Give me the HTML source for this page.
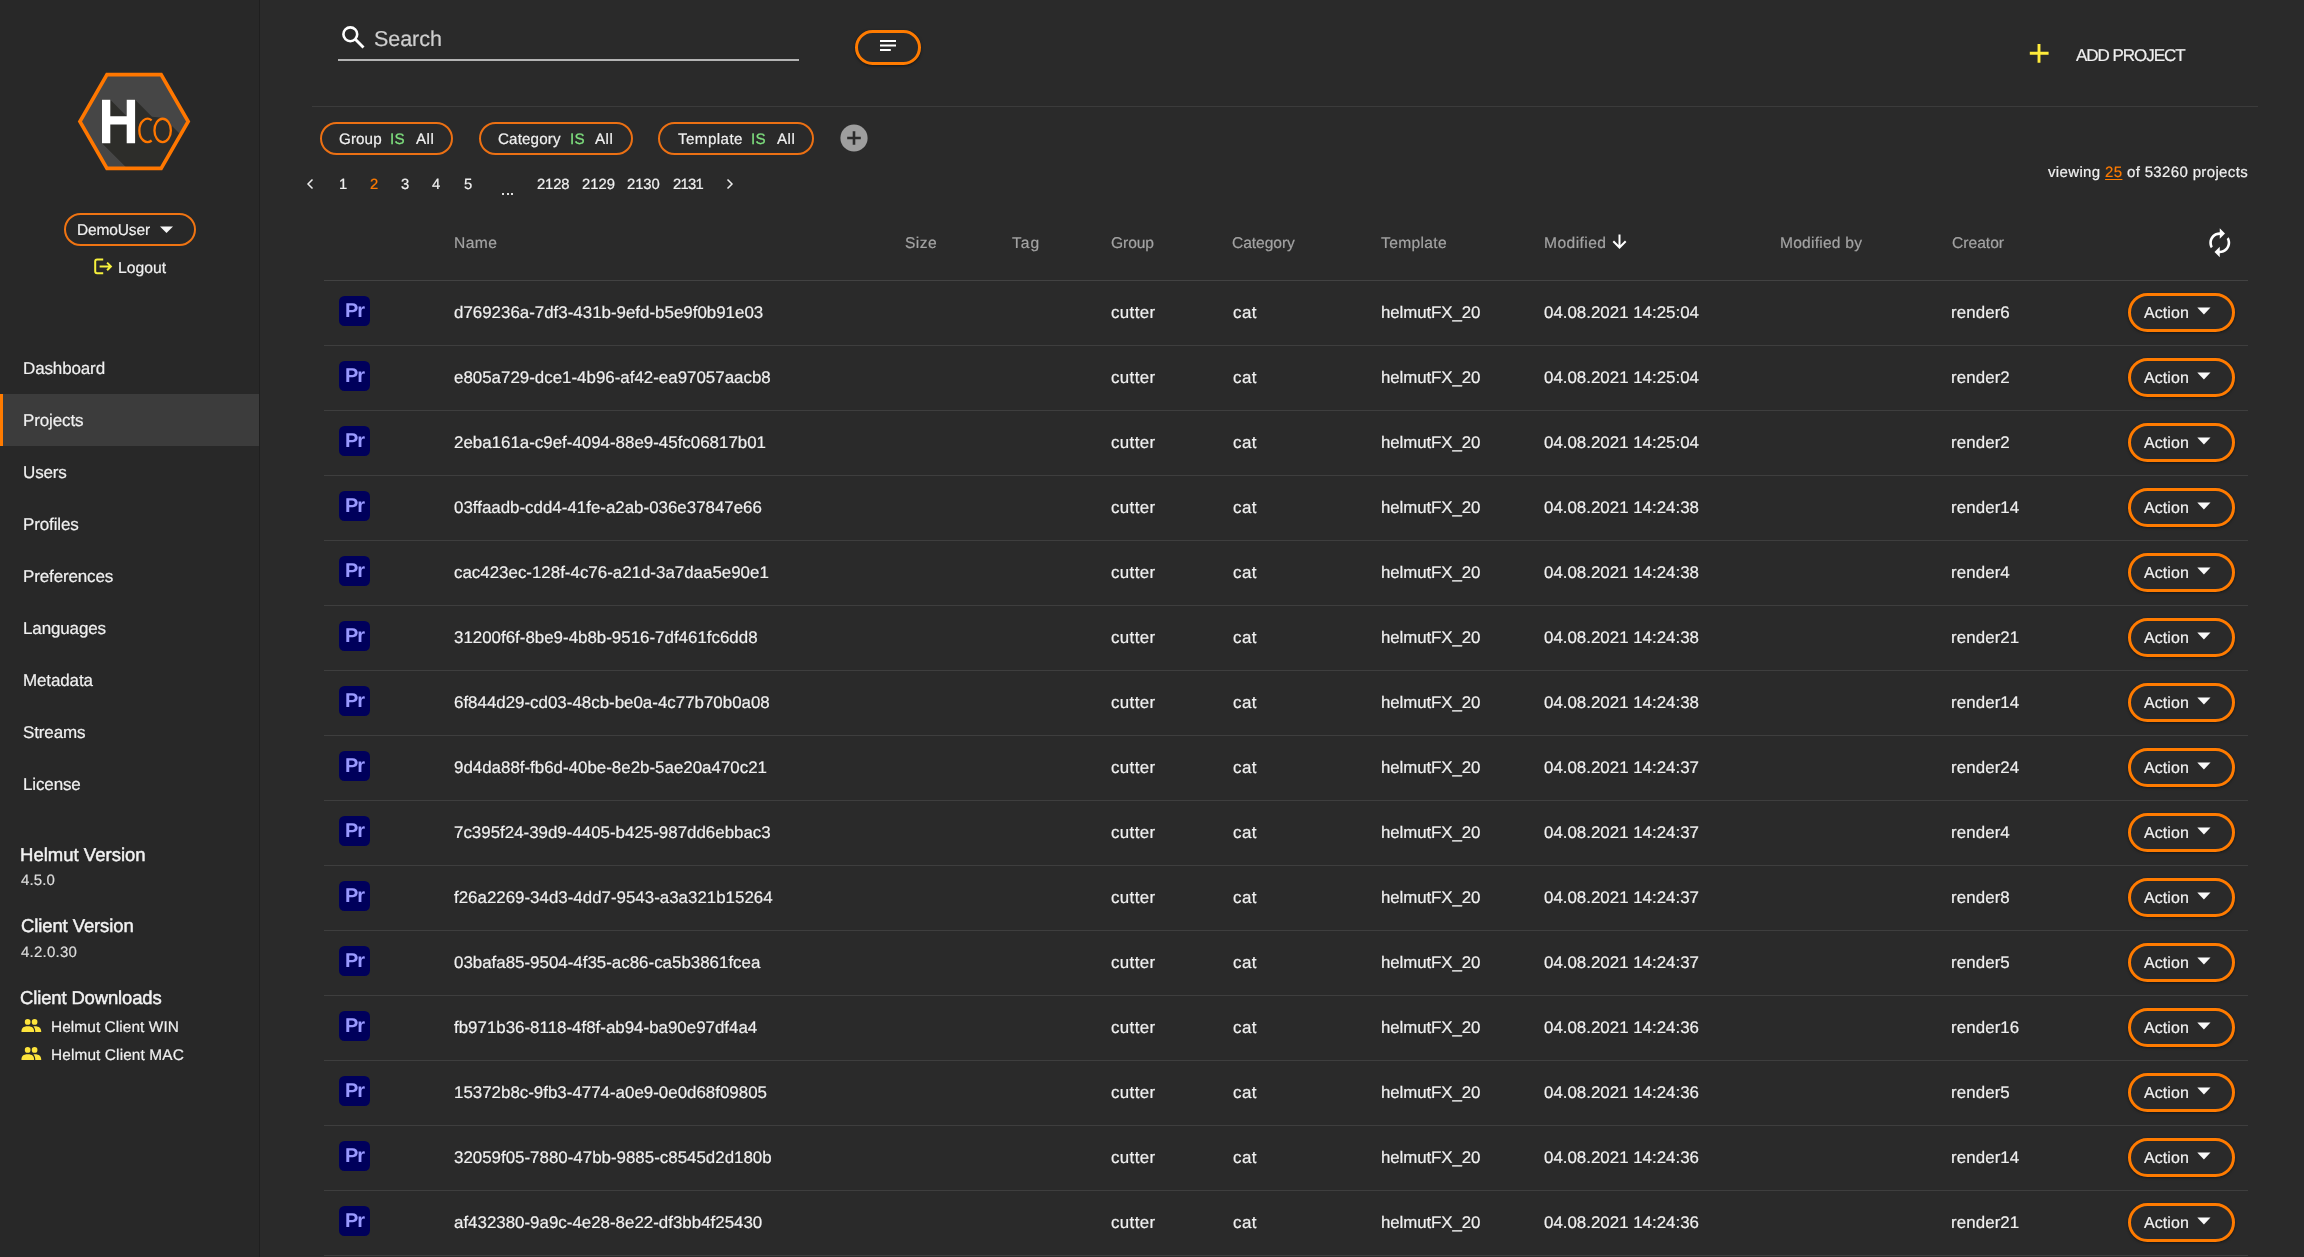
<!DOCTYPE html>
<html><head><meta charset="utf-8"><title>Projects</title>
<style>
html,body{margin:0;padding:0;}
body{width:2304px;height:1257px;overflow:hidden;position:relative;background:#2a2a2a;font-family:"Liberation Sans",sans-serif;text-rendering:geometricPrecision;}
.t{position:absolute;white-space:nowrap;line-height:1;will-change:transform;-webkit-text-stroke:0.2px currentColor;}
.pr{position:absolute;left:339px;width:30.5px;height:30px;background:#00005b;border-radius:5.5px;}
.pr span{will-change:transform;position:absolute;left:5.9px;top:5.2px;font-size:20px;line-height:1;font-weight:bold;color:#9999ff;letter-spacing:-1.1px}
.act{position:absolute;left:2128px;width:101px;height:33px;border:3px solid #ff7b00;border-radius:20px;box-shadow:0 1px 3px rgba(0,0,0,.45)}
</style></head><body>
<div style="position:absolute;left:0;top:0;width:259px;height:1257px;background:#282828"></div>
<div style="position:absolute;left:259px;top:0;width:1px;height:1257px;background:#1f1f1f"></div>
<svg style="position:absolute;left:0;top:0" width="260" height="200" viewBox="0 0 260 200">
<defs><clipPath id="hx"><polygon points="106.97,74.6 161.13,74.6 188.2,121.5 161.13,168.4 106.97,168.4 79.9,121.5"/></clipPath></defs>
<polygon points="106.97,74.6 161.13,74.6 188.2,121.5 161.13,168.4 106.97,168.4 79.9,121.5" fill="#464646"/>
<g clip-path="url(#hx)"><polygon fill="#2d2d2a" points="110.3,99.8 126.7,116.2 126.7,99.8 135.1,99.8 152,116.8 160,117.6 171,125 240,194 182,223.2 102,143.2 102,99.8"/></g>
<polygon points="106.97,74.6 161.13,74.6 188.2,121.5 161.13,168.4 106.97,168.4 79.9,121.5" fill="none" stroke="#ff7700" stroke-width="3.6"/>
<path fill="#ffffff" d="M102,99.8h8.3v16.4h16.4v-16.4h8.4v43.4h-8.4v-18.7h-16.4v18.7h-8.3z"/>
<path fill="none" stroke="#ff7700" stroke-width="2.3" d="M151.65,120.31 A8.2,11.65 0 1 0 151.65,140.49"/>
<ellipse cx="162.65" cy="130.4" rx="8.2" ry="11.65" fill="none" stroke="#ff7700" stroke-width="2.3"/>
</svg>
<div style="position:absolute;left:64px;top:213px;width:128px;height:29px;border:2px solid #f07412;border-radius:17px"></div>
<div id="demo" class="t" style="left:77.33px;top:223px;font-size:15.5px;color:#f0f0f0;letter-spacing:-0.144px;">DemoUser</div>
<svg style="position:absolute;left:159px;top:226px" width="15" height="8" viewBox="0 0 15 8"><polygon points="1,0.5 14,0.5 7.5,7" fill="#f5f5f5"/></svg>
<svg style="position:absolute;left:90px;top:255px" width="26" height="24" viewBox="0 0 26 24">
<path d="M13.2,4.4 H7.1 Q5.2,4.4 5.2,6.3 V16.3 Q5.2,18.2 7.1,18.2 H13.2" fill="none" stroke="#f6f03c" stroke-width="2"/>
<path d="M9.6,11.4 H20.6 M17.1,7.6 L20.9,11.4 L17.1,15.2" fill="none" stroke="#f6f03c" stroke-width="2"/>
</svg>
<div id="logout" class="t" style="left:118.08px;top:261px;font-size:15.7px;color:#f0f0f0;letter-spacing:0.039px;">Logout</div>
<div style="position:absolute;left:0;top:394px;width:259px;height:52px;background:#3c3c3c"></div>
<div style="position:absolute;left:0;top:394px;width:3px;height:52px;background:#ff7b00"></div>
<div id="nav0" class="t" style="left:23.02px;top:360px;font-size:17px;color:#f0f0f0;letter-spacing:-0.135px;">Dashboard</div>
<div id="nav1" class="t" style="left:23.02px;top:412px;font-size:17px;color:#f0f0f0;letter-spacing:-0.135px;">Projects</div>
<div id="nav2" class="t" style="left:23.02px;top:464px;font-size:17px;color:#f0f0f0;letter-spacing:-0.135px;">Users</div>
<div id="nav3" class="t" style="left:23.02px;top:516px;font-size:17px;color:#f0f0f0;letter-spacing:-0.135px;">Profiles</div>
<div id="nav4" class="t" style="left:23.02px;top:568px;font-size:17px;color:#f0f0f0;letter-spacing:-0.135px;">Preferences</div>
<div id="nav5" class="t" style="left:23.02px;top:620px;font-size:17px;color:#f0f0f0;letter-spacing:-0.135px;">Languages</div>
<div id="nav6" class="t" style="left:23.02px;top:672px;font-size:17px;color:#f0f0f0;letter-spacing:-0.135px;">Metadata</div>
<div id="nav7" class="t" style="left:23.02px;top:724px;font-size:17px;color:#f0f0f0;letter-spacing:-0.135px;">Streams</div>
<div id="nav8" class="t" style="left:23.02px;top:776px;font-size:17px;color:#f0f0f0;letter-spacing:-0.135px;">License</div>
<div id="hv" class="t" style="left:20.05px;top:846px;font-size:18.5px;color:#f2f2f2;letter-spacing:0.016px;-webkit-text-stroke:0.45px #f2f2f2;">Helmut Version</div>
<div id="hvn" class="t" style="left:21.12px;top:873px;font-size:15px;color:#dcdcdc;letter-spacing:0.119px;">4.5.0</div>
<div id="cv" class="t" style="left:21.13px;top:917px;font-size:18.5px;color:#f2f2f2;letter-spacing:-0.109px;-webkit-text-stroke:0.45px #f2f2f2;">Client Version</div>
<div id="cvn" class="t" style="left:21.12px;top:945px;font-size:15px;color:#dcdcdc;letter-spacing:0.232px;">4.2.0.30</div>
<div id="cd" class="t" style="left:20.12px;top:989px;font-size:18.5px;color:#f2f2f2;letter-spacing:-0.149px;-webkit-text-stroke:0.45px #f2f2f2;">Client Downloads</div>
<svg style="position:absolute;left:20px;top:1019px" width="23" height="15" viewBox="0 0 23 15">
<circle cx="7.65" cy="2.9" r="2.85" fill="#fde43c"/><circle cx="14.6" cy="2.9" r="2.85" fill="#fde43c"/>
<path d="M1.45,12.9 C1.45,9.4 2.9,7.3 7.8,7.3 C12.7,7.3 14.1,9.4 14.1,12.9 Z" fill="#fde43c"/>
<path d="M14.6,7.3 C19.6,7.3 21.25,9.4 21.25,12.9 H15.3 C15.3,10.7 14.6,9 13.4,7.6 C13.8,7.4 14.2,7.3 14.6,7.3 Z" fill="#fde43c"/>
</svg>
<svg style="position:absolute;left:20px;top:1047px" width="23" height="15" viewBox="0 0 23 15">
<circle cx="7.65" cy="2.9" r="2.85" fill="#fde43c"/><circle cx="14.6" cy="2.9" r="2.85" fill="#fde43c"/>
<path d="M1.45,12.9 C1.45,9.4 2.9,7.3 7.8,7.3 C12.7,7.3 14.1,9.4 14.1,12.9 Z" fill="#fde43c"/>
<path d="M14.6,7.3 C19.6,7.3 21.25,9.4 21.25,12.9 H15.3 C15.3,10.7 14.6,9 13.4,7.6 C13.8,7.4 14.2,7.3 14.6,7.3 Z" fill="#fde43c"/>
</svg>
<div id="win" class="t" style="left:51.02px;top:1020px;font-size:15.4px;color:#f0f0f0;letter-spacing:0.085px;">Helmut Client WIN</div>
<div id="mac" class="t" style="left:51.02px;top:1048px;font-size:15.4px;color:#f0f0f0;letter-spacing:0.120px;">Helmut Client MAC</div>
<svg style="position:absolute;left:338px;top:22px" width="32" height="32" viewBox="0 0 32 32">
<circle cx="12.3" cy="12.3" r="6.9" fill="none" stroke="#ffffff" stroke-width="2.6"/>
<path d="M17.3,17.3 L25.5,25.5" stroke="#ffffff" stroke-width="2.9"/></svg>
<div id="search" class="t" style="left:373.85px;top:29px;font-size:21.5px;color:#cfcfcf;letter-spacing:-0.055px;">Search</div>
<div style="position:absolute;left:338px;top:59px;width:461px;height:2px;background:#b4b4b4"></div>
<div style="position:absolute;left:855px;top:30px;width:60px;height:29px;border:3px solid #ff7b00;border-radius:18px;box-shadow:0 1px 3px rgba(0,0,0,.5)"></div>
<svg style="position:absolute;left:878px;top:38px" width="20" height="14" viewBox="0 0 20 14"><path d="M2,3 H18 M2,7.5 H18 M2,12 H12.8" stroke="#fff" stroke-width="1.9"/></svg>
<svg style="position:absolute;left:2028px;top:42px" width="22" height="22" viewBox="0 0 22 22"><path d="M11,2 V20.8 M1.8,11.3 H20.6" stroke="#ffeb3b" stroke-width="2.9"/></svg>
<div id="add" class="t" style="left:2076.02px;top:47px;font-size:17px;color:#f0f0f0;letter-spacing:-1.031px;">ADD PROJECT</div>
<div style="position:absolute;left:312px;top:106px;width:1946px;height:1px;background:#3b3b3b"></div>
<div style="position:absolute;left:320px;top:122px;width:129px;height:29px;border:2px solid #ec7013;border-radius:17px"></div>
<div id="chlg" class="t" style="left:338.62px;top:132px;font-size:15.2px;color:#f0f0f0;letter-spacing:0.097px;">Group</div>
<div id="chig" class="t" style="left:390.12px;top:132px;font-size:15.2px;color:#7fe07f;letter-spacing:0.4px;-webkit-text-stroke:0.25px #7fe07f;">IS</div>
<div id="chag" class="t" style="left:416.04px;top:132px;font-size:15.2px;color:#f0f0f0;letter-spacing:0.461px;">All</div>
<div style="position:absolute;left:479px;top:122px;width:150px;height:29px;border:2px solid #ec7013;border-radius:17px"></div>
<div id="chlc" class="t" style="left:497.62px;top:132px;font-size:15.2px;color:#f0f0f0;letter-spacing:0.131px;">Category</div>
<div id="chic" class="t" style="left:569.86px;top:132px;font-size:15.2px;color:#7fe07f;letter-spacing:0.4px;-webkit-text-stroke:0.25px #7fe07f;">IS</div>
<div id="chac" class="t" style="left:594.84px;top:132px;font-size:15.2px;color:#f0f0f0;letter-spacing:0.461px;">All</div>
<div style="position:absolute;left:658px;top:122px;width:152px;height:29px;border:2px solid #ec7013;border-radius:17px"></div>
<div id="chlt" class="t" style="left:678.14px;top:132px;font-size:15.2px;color:#f0f0f0;letter-spacing:0.407px;">Template</div>
<div id="chit" class="t" style="left:751.46px;top:132px;font-size:15.2px;color:#7fe07f;letter-spacing:0.4px;-webkit-text-stroke:0.25px #7fe07f;">IS</div>
<div id="chat" class="t" style="left:776.84px;top:132px;font-size:15.2px;color:#f0f0f0;letter-spacing:0.461px;">All</div>
<svg style="position:absolute;left:840px;top:124px" width="28" height="28" viewBox="0 0 28 28"><circle cx="14" cy="14" r="13.6" fill="#9e9e9e"/><path d="M14,7.2 V20.8 M7.2,14 H20.8" stroke="#2b2b2b" stroke-width="2.6"/></svg>
<svg style="position:absolute;left:303px;top:176px" width="14" height="16" viewBox="0 0 14 16"><path d="M9.5,3.5 L5,8 L9.5,12.5" fill="none" stroke="#ececec" stroke-width="1.5"/></svg>
<svg style="position:absolute;left:723px;top:176px" width="14" height="16" viewBox="0 0 14 16"><path d="M4.5,3.5 L9,8 L4.5,12.5" fill="none" stroke="#ececec" stroke-width="1.5"/></svg>
<div id="pg0" class="t" style="left:339.12px;top:178px;font-size:14.8px;color:#f0f0f0;">1</div>
<div id="pg1" class="t" style="left:370.30px;top:178px;font-size:14.8px;color:#ff7b00;">2</div>
<div id="pg2" class="t" style="left:400.91px;top:178px;font-size:14.8px;color:#f0f0f0;">3</div>
<div id="pg3" class="t" style="left:432.49px;top:178px;font-size:14.8px;color:#f0f0f0;">4</div>
<div id="pg4" class="t" style="left:464.17px;top:178px;font-size:14.8px;color:#f0f0f0;">5</div>
<div id="pg5" class="t" style="left:536.76px;top:178px;font-size:14.8px;color:#f0f0f0;letter-spacing:-0.115px;">2128</div>
<div id="pg6" class="t" style="left:581.76px;top:178px;font-size:14.8px;color:#f0f0f0;letter-spacing:0.039px;">2129</div>
<div id="pg7" class="t" style="left:626.76px;top:178px;font-size:14.8px;color:#f0f0f0;letter-spacing:-0.063px;">2130</div>
<div id="pg8" class="t" style="left:672.92px;top:178px;font-size:14.8px;color:#f0f0f0;letter-spacing:-0.696px;">2131</div>
<div style="position:absolute;left:502px;top:193px;width:2px;height:2px;background:#e0e0e0"></div>
<div style="position:absolute;left:506.5px;top:193px;width:2px;height:2px;background:#e0e0e0"></div>
<div style="position:absolute;left:511px;top:193px;width:2px;height:2px;background:#e0e0e0"></div>
<div id="view" class="t" style="left:2048.29px;top:165px;font-size:15px;color:#f0f0f0;letter-spacing:0.353px;">viewing <span style="color:#ff7b00;text-decoration:underline;text-decoration-thickness:1.3px;text-underline-offset:1.8px">25</span> of 53260 projects</div>
<div id="h0" class="t" style="left:453.78px;top:236px;font-size:15.6px;color:#a3a3a3;letter-spacing:0.419px;">Name</div>
<div id="h1" class="t" style="left:905.31px;top:236px;font-size:15.6px;color:#a3a3a3;letter-spacing:0.407px;">Size</div>
<div id="h2" class="t" style="left:1011.50px;top:236px;font-size:15.6px;color:#a3a3a3;letter-spacing:1.000px;">Tag</div>
<div id="h3" class="t" style="left:1111.30px;top:236px;font-size:15.6px;color:#a3a3a3;letter-spacing:-0.087px;">Group</div>
<div id="h4" class="t" style="left:1232.27px;top:236px;font-size:15.6px;color:#a3a3a3;letter-spacing:-0.065px;">Category</div>
<div id="h5" class="t" style="left:1380.70px;top:236px;font-size:15.6px;color:#a3a3a3;letter-spacing:0.351px;">Template</div>
<div id="h6" class="t" style="left:1544.39px;top:236px;font-size:15.6px;color:#a3a3a3;letter-spacing:0.440px;">Modified</div>
<div id="h7" class="t" style="left:1779.79px;top:236px;font-size:15.6px;color:#a3a3a3;letter-spacing:0.223px;">Modified by</div>
<div id="h8" class="t" style="left:1952.27px;top:236px;font-size:15.6px;color:#a3a3a3;letter-spacing:0.008px;">Creator</div>
<svg style="position:absolute;left:1609px;top:232px" width="20" height="20" viewBox="0 0 20 20"><path d="M10.5,2.6 V15.3 M4.3,9.3 L10.5,15.5 L16.7,9.3" fill="none" stroke="#fff" stroke-width="2"/></svg>
<svg style="position:absolute;left:2203.75px;top:227.3px" width="31.5" height="31.5" viewBox="0 0 24 24"><path fill="#fff" d="M12 6v3l4-4-4-4v3c-4.42 0-8 3.58-8 8 0 1.57.46 3.03 1.24 4.26L6.7 14.8c-.45-.83-.7-1.790-.7-2.8 0-3.310 2.690-6 6-6zm6.76 1.74L17.3 9.2c.44.84.7 1.79.7 2.8 0 3.31-2.69 6-6 6v-3l-4 4 4 4v-3c4.42 0 8-3.580 8-8 0-1.57-.46-3.03-1.24-4.26z"/></svg>
<div style="position:absolute;left:324px;top:280px;width:1924px;height:1px;background:#424242"></div>
<div class="pr" style="top:296px"><span>Pr</span></div>
<div id="nm0" class="t" style="left:454.45px;top:305px;font-size:16.9px;color:#f0f0f0;letter-spacing:0.005px;">d769236a-7df3-431b-9efd-b5e9f0b91e03</div>
<div id="cu0" class="t" style="left:1111.15px;top:305px;font-size:16.9px;color:#f0f0f0;letter-spacing:0.382px;">cutter</div>
<div id="ca0" class="t" style="left:1232.90px;top:305px;font-size:16.9px;color:#f0f0f0;letter-spacing:0.443px;">cat</div>
<div id="fx0" class="t" style="left:1380.59px;top:305px;font-size:16.9px;color:#f0f0f0;letter-spacing:-0.099px;">helmutFX_20</div>
<div id="dt0" class="t" style="left:1544.46px;top:305px;font-size:16.9px;color:#f0f0f0;letter-spacing:0.000px;">04.08.2021 14:25:04</div>
<div id="cr0" class="t" style="left:1951.45px;top:305px;font-size:16.9px;color:#f0f0f0;letter-spacing:0.091px;">render6</div>
<div class="act" style="top:293px"></div>
<div id="ac0" class="t" style="left:2144.09px;top:306px;font-size:16px;color:#f2f2f2;letter-spacing:0.068px;">Action</div>
<svg style="position:absolute;left:2196px;top:306px" width="16" height="10" viewBox="0 0 16 10"><polygon points="1.3,1.5 14.5,1.5 7.9,8.6" fill="#fafafa"/></svg>
<div style="position:absolute;left:324px;top:345px;width:1924px;height:1px;background:#3e3e3e"></div>
<div class="pr" style="top:361px"><span>Pr</span></div>
<div id="nm1" class="t" style="left:454.45px;top:370px;font-size:16.9px;color:#f0f0f0;letter-spacing:0.005px;">e805a729-dce1-4b96-af42-ea97057aacb8</div>
<div id="cu1" class="t" style="left:1111.15px;top:370px;font-size:16.9px;color:#f0f0f0;letter-spacing:0.382px;">cutter</div>
<div id="ca1" class="t" style="left:1232.90px;top:370px;font-size:16.9px;color:#f0f0f0;letter-spacing:0.443px;">cat</div>
<div id="fx1" class="t" style="left:1380.59px;top:370px;font-size:16.9px;color:#f0f0f0;letter-spacing:-0.099px;">helmutFX_20</div>
<div id="dt1" class="t" style="left:1544.46px;top:370px;font-size:16.9px;color:#f0f0f0;letter-spacing:0.000px;">04.08.2021 14:25:04</div>
<div id="cr1" class="t" style="left:1951.45px;top:370px;font-size:16.9px;color:#f0f0f0;letter-spacing:0.091px;">render2</div>
<div class="act" style="top:358px"></div>
<div id="ac1" class="t" style="left:2144.09px;top:371px;font-size:16px;color:#f2f2f2;letter-spacing:0.068px;">Action</div>
<svg style="position:absolute;left:2196px;top:371px" width="16" height="10" viewBox="0 0 16 10"><polygon points="1.3,1.5 14.5,1.5 7.9,8.6" fill="#fafafa"/></svg>
<div style="position:absolute;left:324px;top:410px;width:1924px;height:1px;background:#3e3e3e"></div>
<div class="pr" style="top:426px"><span>Pr</span></div>
<div id="nm2" class="t" style="left:454.45px;top:435px;font-size:16.9px;color:#f0f0f0;letter-spacing:0.005px;">2eba161a-c9ef-4094-88e9-45fc06817b01</div>
<div id="cu2" class="t" style="left:1111.15px;top:435px;font-size:16.9px;color:#f0f0f0;letter-spacing:0.382px;">cutter</div>
<div id="ca2" class="t" style="left:1232.90px;top:435px;font-size:16.9px;color:#f0f0f0;letter-spacing:0.443px;">cat</div>
<div id="fx2" class="t" style="left:1380.59px;top:435px;font-size:16.9px;color:#f0f0f0;letter-spacing:-0.099px;">helmutFX_20</div>
<div id="dt2" class="t" style="left:1544.46px;top:435px;font-size:16.9px;color:#f0f0f0;letter-spacing:0.000px;">04.08.2021 14:25:04</div>
<div id="cr2" class="t" style="left:1951.45px;top:435px;font-size:16.9px;color:#f0f0f0;letter-spacing:0.091px;">render2</div>
<div class="act" style="top:423px"></div>
<div id="ac2" class="t" style="left:2144.09px;top:436px;font-size:16px;color:#f2f2f2;letter-spacing:0.068px;">Action</div>
<svg style="position:absolute;left:2196px;top:436px" width="16" height="10" viewBox="0 0 16 10"><polygon points="1.3,1.5 14.5,1.5 7.9,8.6" fill="#fafafa"/></svg>
<div style="position:absolute;left:324px;top:475px;width:1924px;height:1px;background:#3e3e3e"></div>
<div class="pr" style="top:491px"><span>Pr</span></div>
<div id="nm3" class="t" style="left:454.45px;top:500px;font-size:16.9px;color:#f0f0f0;letter-spacing:0.005px;">03ffaadb-cdd4-41fe-a2ab-036e37847e66</div>
<div id="cu3" class="t" style="left:1111.15px;top:500px;font-size:16.9px;color:#f0f0f0;letter-spacing:0.382px;">cutter</div>
<div id="ca3" class="t" style="left:1232.90px;top:500px;font-size:16.9px;color:#f0f0f0;letter-spacing:0.443px;">cat</div>
<div id="fx3" class="t" style="left:1380.59px;top:500px;font-size:16.9px;color:#f0f0f0;letter-spacing:-0.099px;">helmutFX_20</div>
<div id="dt3" class="t" style="left:1544.46px;top:500px;font-size:16.9px;color:#f0f0f0;letter-spacing:0.000px;">04.08.2021 14:24:38</div>
<div id="cr3" class="t" style="left:1951.45px;top:500px;font-size:16.9px;color:#f0f0f0;letter-spacing:0.091px;">render14</div>
<div class="act" style="top:488px"></div>
<div id="ac3" class="t" style="left:2144.09px;top:501px;font-size:16px;color:#f2f2f2;letter-spacing:0.068px;">Action</div>
<svg style="position:absolute;left:2196px;top:501px" width="16" height="10" viewBox="0 0 16 10"><polygon points="1.3,1.5 14.5,1.5 7.9,8.6" fill="#fafafa"/></svg>
<div style="position:absolute;left:324px;top:540px;width:1924px;height:1px;background:#3e3e3e"></div>
<div class="pr" style="top:556px"><span>Pr</span></div>
<div id="nm4" class="t" style="left:454.45px;top:565px;font-size:16.9px;color:#f0f0f0;letter-spacing:0.005px;">cac423ec-128f-4c76-a21d-3a7daa5e90e1</div>
<div id="cu4" class="t" style="left:1111.15px;top:565px;font-size:16.9px;color:#f0f0f0;letter-spacing:0.382px;">cutter</div>
<div id="ca4" class="t" style="left:1232.90px;top:565px;font-size:16.9px;color:#f0f0f0;letter-spacing:0.443px;">cat</div>
<div id="fx4" class="t" style="left:1380.59px;top:565px;font-size:16.9px;color:#f0f0f0;letter-spacing:-0.099px;">helmutFX_20</div>
<div id="dt4" class="t" style="left:1544.46px;top:565px;font-size:16.9px;color:#f0f0f0;letter-spacing:0.000px;">04.08.2021 14:24:38</div>
<div id="cr4" class="t" style="left:1951.45px;top:565px;font-size:16.9px;color:#f0f0f0;letter-spacing:0.091px;">render4</div>
<div class="act" style="top:553px"></div>
<div id="ac4" class="t" style="left:2144.09px;top:566px;font-size:16px;color:#f2f2f2;letter-spacing:0.068px;">Action</div>
<svg style="position:absolute;left:2196px;top:566px" width="16" height="10" viewBox="0 0 16 10"><polygon points="1.3,1.5 14.5,1.5 7.9,8.6" fill="#fafafa"/></svg>
<div style="position:absolute;left:324px;top:605px;width:1924px;height:1px;background:#3e3e3e"></div>
<div class="pr" style="top:621px"><span>Pr</span></div>
<div id="nm5" class="t" style="left:454.45px;top:630px;font-size:16.9px;color:#f0f0f0;letter-spacing:0.005px;">31200f6f-8be9-4b8b-9516-7df461fc6dd8</div>
<div id="cu5" class="t" style="left:1111.15px;top:630px;font-size:16.9px;color:#f0f0f0;letter-spacing:0.382px;">cutter</div>
<div id="ca5" class="t" style="left:1232.90px;top:630px;font-size:16.9px;color:#f0f0f0;letter-spacing:0.443px;">cat</div>
<div id="fx5" class="t" style="left:1380.59px;top:630px;font-size:16.9px;color:#f0f0f0;letter-spacing:-0.099px;">helmutFX_20</div>
<div id="dt5" class="t" style="left:1544.46px;top:630px;font-size:16.9px;color:#f0f0f0;letter-spacing:0.000px;">04.08.2021 14:24:38</div>
<div id="cr5" class="t" style="left:1951.45px;top:630px;font-size:16.9px;color:#f0f0f0;letter-spacing:0.091px;">render21</div>
<div class="act" style="top:618px"></div>
<div id="ac5" class="t" style="left:2144.09px;top:631px;font-size:16px;color:#f2f2f2;letter-spacing:0.068px;">Action</div>
<svg style="position:absolute;left:2196px;top:631px" width="16" height="10" viewBox="0 0 16 10"><polygon points="1.3,1.5 14.5,1.5 7.9,8.6" fill="#fafafa"/></svg>
<div style="position:absolute;left:324px;top:670px;width:1924px;height:1px;background:#3e3e3e"></div>
<div class="pr" style="top:686px"><span>Pr</span></div>
<div id="nm6" class="t" style="left:454.45px;top:695px;font-size:16.9px;color:#f0f0f0;letter-spacing:0.005px;">6f844d29-cd03-48cb-be0a-4c77b70b0a08</div>
<div id="cu6" class="t" style="left:1111.15px;top:695px;font-size:16.9px;color:#f0f0f0;letter-spacing:0.382px;">cutter</div>
<div id="ca6" class="t" style="left:1232.90px;top:695px;font-size:16.9px;color:#f0f0f0;letter-spacing:0.443px;">cat</div>
<div id="fx6" class="t" style="left:1380.59px;top:695px;font-size:16.9px;color:#f0f0f0;letter-spacing:-0.099px;">helmutFX_20</div>
<div id="dt6" class="t" style="left:1544.46px;top:695px;font-size:16.9px;color:#f0f0f0;letter-spacing:0.000px;">04.08.2021 14:24:38</div>
<div id="cr6" class="t" style="left:1951.45px;top:695px;font-size:16.9px;color:#f0f0f0;letter-spacing:0.091px;">render14</div>
<div class="act" style="top:683px"></div>
<div id="ac6" class="t" style="left:2144.09px;top:696px;font-size:16px;color:#f2f2f2;letter-spacing:0.068px;">Action</div>
<svg style="position:absolute;left:2196px;top:696px" width="16" height="10" viewBox="0 0 16 10"><polygon points="1.3,1.5 14.5,1.5 7.9,8.6" fill="#fafafa"/></svg>
<div style="position:absolute;left:324px;top:735px;width:1924px;height:1px;background:#3e3e3e"></div>
<div class="pr" style="top:751px"><span>Pr</span></div>
<div id="nm7" class="t" style="left:454.45px;top:760px;font-size:16.9px;color:#f0f0f0;letter-spacing:0.005px;">9d4da88f-fb6d-40be-8e2b-5ae20a470c21</div>
<div id="cu7" class="t" style="left:1111.15px;top:760px;font-size:16.9px;color:#f0f0f0;letter-spacing:0.382px;">cutter</div>
<div id="ca7" class="t" style="left:1232.90px;top:760px;font-size:16.9px;color:#f0f0f0;letter-spacing:0.443px;">cat</div>
<div id="fx7" class="t" style="left:1380.59px;top:760px;font-size:16.9px;color:#f0f0f0;letter-spacing:-0.099px;">helmutFX_20</div>
<div id="dt7" class="t" style="left:1544.46px;top:760px;font-size:16.9px;color:#f0f0f0;letter-spacing:0.000px;">04.08.2021 14:24:37</div>
<div id="cr7" class="t" style="left:1951.45px;top:760px;font-size:16.9px;color:#f0f0f0;letter-spacing:0.091px;">render24</div>
<div class="act" style="top:748px"></div>
<div id="ac7" class="t" style="left:2144.09px;top:761px;font-size:16px;color:#f2f2f2;letter-spacing:0.068px;">Action</div>
<svg style="position:absolute;left:2196px;top:761px" width="16" height="10" viewBox="0 0 16 10"><polygon points="1.3,1.5 14.5,1.5 7.9,8.6" fill="#fafafa"/></svg>
<div style="position:absolute;left:324px;top:800px;width:1924px;height:1px;background:#3e3e3e"></div>
<div class="pr" style="top:816px"><span>Pr</span></div>
<div id="nm8" class="t" style="left:454.45px;top:825px;font-size:16.9px;color:#f0f0f0;letter-spacing:0.005px;">7c395f24-39d9-4405-b425-987dd6ebbac3</div>
<div id="cu8" class="t" style="left:1111.15px;top:825px;font-size:16.9px;color:#f0f0f0;letter-spacing:0.382px;">cutter</div>
<div id="ca8" class="t" style="left:1232.90px;top:825px;font-size:16.9px;color:#f0f0f0;letter-spacing:0.443px;">cat</div>
<div id="fx8" class="t" style="left:1380.59px;top:825px;font-size:16.9px;color:#f0f0f0;letter-spacing:-0.099px;">helmutFX_20</div>
<div id="dt8" class="t" style="left:1544.46px;top:825px;font-size:16.9px;color:#f0f0f0;letter-spacing:0.000px;">04.08.2021 14:24:37</div>
<div id="cr8" class="t" style="left:1951.45px;top:825px;font-size:16.9px;color:#f0f0f0;letter-spacing:0.091px;">render4</div>
<div class="act" style="top:813px"></div>
<div id="ac8" class="t" style="left:2144.09px;top:826px;font-size:16px;color:#f2f2f2;letter-spacing:0.068px;">Action</div>
<svg style="position:absolute;left:2196px;top:826px" width="16" height="10" viewBox="0 0 16 10"><polygon points="1.3,1.5 14.5,1.5 7.9,8.6" fill="#fafafa"/></svg>
<div style="position:absolute;left:324px;top:865px;width:1924px;height:1px;background:#3e3e3e"></div>
<div class="pr" style="top:881px"><span>Pr</span></div>
<div id="nm9" class="t" style="left:454.45px;top:890px;font-size:16.9px;color:#f0f0f0;letter-spacing:0.005px;">f26a2269-34d3-4dd7-9543-a3a321b15264</div>
<div id="cu9" class="t" style="left:1111.15px;top:890px;font-size:16.9px;color:#f0f0f0;letter-spacing:0.382px;">cutter</div>
<div id="ca9" class="t" style="left:1232.90px;top:890px;font-size:16.9px;color:#f0f0f0;letter-spacing:0.443px;">cat</div>
<div id="fx9" class="t" style="left:1380.59px;top:890px;font-size:16.9px;color:#f0f0f0;letter-spacing:-0.099px;">helmutFX_20</div>
<div id="dt9" class="t" style="left:1544.46px;top:890px;font-size:16.9px;color:#f0f0f0;letter-spacing:0.000px;">04.08.2021 14:24:37</div>
<div id="cr9" class="t" style="left:1951.45px;top:890px;font-size:16.9px;color:#f0f0f0;letter-spacing:0.091px;">render8</div>
<div class="act" style="top:878px"></div>
<div id="ac9" class="t" style="left:2144.09px;top:891px;font-size:16px;color:#f2f2f2;letter-spacing:0.068px;">Action</div>
<svg style="position:absolute;left:2196px;top:891px" width="16" height="10" viewBox="0 0 16 10"><polygon points="1.3,1.5 14.5,1.5 7.9,8.6" fill="#fafafa"/></svg>
<div style="position:absolute;left:324px;top:930px;width:1924px;height:1px;background:#3e3e3e"></div>
<div class="pr" style="top:946px"><span>Pr</span></div>
<div id="nm10" class="t" style="left:454.45px;top:955px;font-size:16.9px;color:#f0f0f0;letter-spacing:0.005px;">03bafa85-9504-4f35-ac86-ca5b3861fcea</div>
<div id="cu10" class="t" style="left:1111.15px;top:955px;font-size:16.9px;color:#f0f0f0;letter-spacing:0.382px;">cutter</div>
<div id="ca10" class="t" style="left:1232.90px;top:955px;font-size:16.9px;color:#f0f0f0;letter-spacing:0.443px;">cat</div>
<div id="fx10" class="t" style="left:1380.59px;top:955px;font-size:16.9px;color:#f0f0f0;letter-spacing:-0.099px;">helmutFX_20</div>
<div id="dt10" class="t" style="left:1544.46px;top:955px;font-size:16.9px;color:#f0f0f0;letter-spacing:0.000px;">04.08.2021 14:24:37</div>
<div id="cr10" class="t" style="left:1951.45px;top:955px;font-size:16.9px;color:#f0f0f0;letter-spacing:0.091px;">render5</div>
<div class="act" style="top:943px"></div>
<div id="ac10" class="t" style="left:2144.09px;top:956px;font-size:16px;color:#f2f2f2;letter-spacing:0.068px;">Action</div>
<svg style="position:absolute;left:2196px;top:956px" width="16" height="10" viewBox="0 0 16 10"><polygon points="1.3,1.5 14.5,1.5 7.9,8.6" fill="#fafafa"/></svg>
<div style="position:absolute;left:324px;top:995px;width:1924px;height:1px;background:#3e3e3e"></div>
<div class="pr" style="top:1011px"><span>Pr</span></div>
<div id="nm11" class="t" style="left:454.45px;top:1020px;font-size:16.9px;color:#f0f0f0;letter-spacing:0.005px;">fb971b36-8118-4f8f-ab94-ba90e97df4a4</div>
<div id="cu11" class="t" style="left:1111.15px;top:1020px;font-size:16.9px;color:#f0f0f0;letter-spacing:0.382px;">cutter</div>
<div id="ca11" class="t" style="left:1232.90px;top:1020px;font-size:16.9px;color:#f0f0f0;letter-spacing:0.443px;">cat</div>
<div id="fx11" class="t" style="left:1380.59px;top:1020px;font-size:16.9px;color:#f0f0f0;letter-spacing:-0.099px;">helmutFX_20</div>
<div id="dt11" class="t" style="left:1544.46px;top:1020px;font-size:16.9px;color:#f0f0f0;letter-spacing:0.000px;">04.08.2021 14:24:36</div>
<div id="cr11" class="t" style="left:1951.45px;top:1020px;font-size:16.9px;color:#f0f0f0;letter-spacing:0.091px;">render16</div>
<div class="act" style="top:1008px"></div>
<div id="ac11" class="t" style="left:2144.09px;top:1021px;font-size:16px;color:#f2f2f2;letter-spacing:0.068px;">Action</div>
<svg style="position:absolute;left:2196px;top:1021px" width="16" height="10" viewBox="0 0 16 10"><polygon points="1.3,1.5 14.5,1.5 7.9,8.6" fill="#fafafa"/></svg>
<div style="position:absolute;left:324px;top:1060px;width:1924px;height:1px;background:#3e3e3e"></div>
<div class="pr" style="top:1076px"><span>Pr</span></div>
<div id="nm12" class="t" style="left:454.45px;top:1085px;font-size:16.9px;color:#f0f0f0;letter-spacing:0.005px;">15372b8c-9fb3-4774-a0e9-0e0d68f09805</div>
<div id="cu12" class="t" style="left:1111.15px;top:1085px;font-size:16.9px;color:#f0f0f0;letter-spacing:0.382px;">cutter</div>
<div id="ca12" class="t" style="left:1232.90px;top:1085px;font-size:16.9px;color:#f0f0f0;letter-spacing:0.443px;">cat</div>
<div id="fx12" class="t" style="left:1380.59px;top:1085px;font-size:16.9px;color:#f0f0f0;letter-spacing:-0.099px;">helmutFX_20</div>
<div id="dt12" class="t" style="left:1544.46px;top:1085px;font-size:16.9px;color:#f0f0f0;letter-spacing:0.000px;">04.08.2021 14:24:36</div>
<div id="cr12" class="t" style="left:1951.45px;top:1085px;font-size:16.9px;color:#f0f0f0;letter-spacing:0.091px;">render5</div>
<div class="act" style="top:1073px"></div>
<div id="ac12" class="t" style="left:2144.09px;top:1086px;font-size:16px;color:#f2f2f2;letter-spacing:0.068px;">Action</div>
<svg style="position:absolute;left:2196px;top:1086px" width="16" height="10" viewBox="0 0 16 10"><polygon points="1.3,1.5 14.5,1.5 7.9,8.6" fill="#fafafa"/></svg>
<div style="position:absolute;left:324px;top:1125px;width:1924px;height:1px;background:#3e3e3e"></div>
<div class="pr" style="top:1141px"><span>Pr</span></div>
<div id="nm13" class="t" style="left:454.45px;top:1150px;font-size:16.9px;color:#f0f0f0;letter-spacing:0.005px;">32059f05-7880-47bb-9885-c8545d2d180b</div>
<div id="cu13" class="t" style="left:1111.15px;top:1150px;font-size:16.9px;color:#f0f0f0;letter-spacing:0.382px;">cutter</div>
<div id="ca13" class="t" style="left:1232.90px;top:1150px;font-size:16.9px;color:#f0f0f0;letter-spacing:0.443px;">cat</div>
<div id="fx13" class="t" style="left:1380.59px;top:1150px;font-size:16.9px;color:#f0f0f0;letter-spacing:-0.099px;">helmutFX_20</div>
<div id="dt13" class="t" style="left:1544.46px;top:1150px;font-size:16.9px;color:#f0f0f0;letter-spacing:0.000px;">04.08.2021 14:24:36</div>
<div id="cr13" class="t" style="left:1951.45px;top:1150px;font-size:16.9px;color:#f0f0f0;letter-spacing:0.091px;">render14</div>
<div class="act" style="top:1138px"></div>
<div id="ac13" class="t" style="left:2144.09px;top:1151px;font-size:16px;color:#f2f2f2;letter-spacing:0.068px;">Action</div>
<svg style="position:absolute;left:2196px;top:1151px" width="16" height="10" viewBox="0 0 16 10"><polygon points="1.3,1.5 14.5,1.5 7.9,8.6" fill="#fafafa"/></svg>
<div style="position:absolute;left:324px;top:1190px;width:1924px;height:1px;background:#3e3e3e"></div>
<div class="pr" style="top:1206px"><span>Pr</span></div>
<div id="nm14" class="t" style="left:454.45px;top:1215px;font-size:16.9px;color:#f0f0f0;letter-spacing:0.005px;">af432380-9a9c-4e28-8e22-df3bb4f25430</div>
<div id="cu14" class="t" style="left:1111.15px;top:1215px;font-size:16.9px;color:#f0f0f0;letter-spacing:0.382px;">cutter</div>
<div id="ca14" class="t" style="left:1232.90px;top:1215px;font-size:16.9px;color:#f0f0f0;letter-spacing:0.443px;">cat</div>
<div id="fx14" class="t" style="left:1380.59px;top:1215px;font-size:16.9px;color:#f0f0f0;letter-spacing:-0.099px;">helmutFX_20</div>
<div id="dt14" class="t" style="left:1544.46px;top:1215px;font-size:16.9px;color:#f0f0f0;letter-spacing:0.000px;">04.08.2021 14:24:36</div>
<div id="cr14" class="t" style="left:1951.45px;top:1215px;font-size:16.9px;color:#f0f0f0;letter-spacing:0.091px;">render21</div>
<div class="act" style="top:1203px"></div>
<div id="ac14" class="t" style="left:2144.09px;top:1216px;font-size:16px;color:#f2f2f2;letter-spacing:0.068px;">Action</div>
<svg style="position:absolute;left:2196px;top:1216px" width="16" height="10" viewBox="0 0 16 10"><polygon points="1.3,1.5 14.5,1.5 7.9,8.6" fill="#fafafa"/></svg>
<div style="position:absolute;left:324px;top:1255px;width:1924px;height:1px;background:#3e3e3e"></div>
</body></html>
